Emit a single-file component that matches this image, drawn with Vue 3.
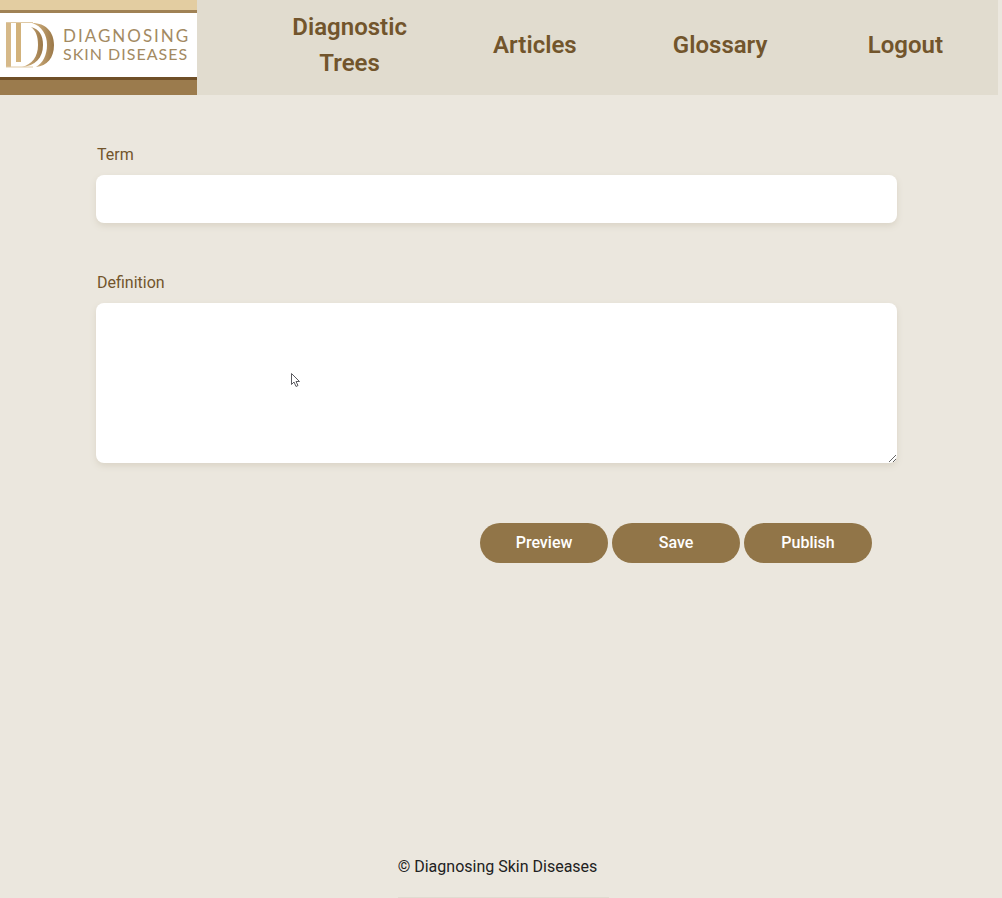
<script setup>
import { ref } from 'vue'

const navItems = ['Diagnostic Trees', 'Articles', 'Glossary', 'Logout']
const actions = ['Preview', 'Save', 'Publish']
const term = ref('')
const definition = ref('')
</script>

<template>
  <div class="page">
    <header class="header">
      <a class="logo" href="#">
        <svg class="mark" viewBox="0 0 50 46" width="50" height="46" aria-hidden="true">
          <defs>
            <linearGradient id="gold" x1="0" x2="1">
              <stop offset="0" stop-color="#d8b988" />
              <stop offset="1" stop-color="#9a7747" />
            </linearGradient>
          </defs>
          <rect x="1" y="1" width="5" height="44" fill="#d6b989" />
          <rect x="11" y="1" width="5" height="39" fill="#d2b27b" />
          <path d="M1 .5H28M1 45H28" fill="none" stroke="#dfc9a5" />
          <path d="M26 5C34 7 38 13 38 23C38 36 30 44 17 45C27 42 33 35 33 23C33 14 31 9 26 5Z" fill="url(#gold)" />
          <path d="M27 1C41 1 49 10 49 23S42 44 31 45C38 41 42 33 42 23S37 4 27 1Z" fill="url(#gold)" />
        </svg>
        <span class="wordmark">
          <span class="word-top">DIAGNOSING</span>
          <span class="word-bottom">SKIN DISEASES</span>
        </span>
      </a>
      <nav class="nav">
        <a v-for="item in navItems" :key="item" href="#">{{ item }}</a>
      </nav>
    </header>

    <main class="main">
      <form class="form" @submit.prevent>
        <div class="field">
          <label for="term">Term</label>
          <input id="term" v-model="term" type="text" />
        </div>
        <div class="field">
          <label for="definition">Definition</label>
          <textarea id="definition" v-model="definition"></textarea>
          <svg class="pointer" viewBox="0 0 12 18" width="12" height="18" aria-hidden="true">
            <path d="M1.500 1.500V12.500L4 10L6 14.500L8 13.500L6 9.500H9.500Z" fill="#fff" stroke="#5b5b60" />
          </svg>
        </div>
        <div class="actions">
          <button v-for="action in actions" :key="action" type="button">{{ action }}</button>
        </div>
      </form>
    </main>

    <footer class="footer">
      <p>© Diagnosing Skin Diseases</p>
    </footer>
  </div>
</template>

<style>
body {
  margin: 0;
  background: #ebe7de;
}
</style>

<style scoped>
.page {
  box-sizing: border-box;
  min-height: 100vh;
  display: flex;
  flex-direction: column;
  background: #ebe7de;
  color: #212121;
  font: 16px/24px Roboto, sans-serif;
}

.header {
  display: flex;
  margin-right: 4px;
  background: #e1dccf;
}

.logo {
  box-sizing: border-box;
  flex: 0 0 197px;
  min-height: 95px;
  display: flex;
  align-items: center;
  gap: 8px;
  padding: 13px 0 18px 5px;
  background: linear-gradient(
    #e3cda1 0 10px,
    #a08255 10px 13px,
    #fff 13px 77px,
    #6f4f27 77px 80px,
    #9b7b4d 80px
  );
  text-decoration: none;
}

.mark {
  flex: none;
}

.wordmark {
  display: flex;
  flex-direction: column;
  color: #a38a62;
  font-family: Lato, sans-serif;
  line-height: 18px;
  white-space: nowrap;
}

.word-top {
  font-size: 17px;
  letter-spacing: 2px;
}

.word-bottom {
  font-size: 16px;
  letter-spacing: 1px;
}

.nav {
  flex: 1;
  display: grid;
  grid-template-columns: repeat(4, 1fr);
  align-items: center;
  padding: 0 0 5px 60px;
}

.nav a {
  padding: 0 32px;
  color: #72552c;
  font-size: 24px;
  font-weight: 600;
  line-height: 36px;
  text-align: center;
  text-decoration: none;
}

.main {
  flex: 1;
  padding: 48px 105px 48px 96px;
}

.field {
  position: relative;
  display: flex;
  flex-direction: column;
  gap: 8px;
  margin-bottom: 48px;
}

.field label {
  padding-left: 1px;
  color: #72552c;
}

.field input,
.field textarea {
  box-sizing: border-box;
  width: 100%;
  margin: 0;
  padding: 12px;
  border: 0;
  border-radius: 8px;
  background: #fff;
  box-shadow: 0 3px 6px #dad4c7;
  color: #212121;
  font: inherit;
}

.field input {
  height: 48px;
}

.field textarea {
  height: 160px;
  resize: vertical;
}

.pointer {
  position: absolute;
  top: 101px;
  left: 194px;
  pointer-events: none;
}

.actions {
  display: flex;
  justify-content: flex-end;
  gap: 4px;
  padding: 12px 25px 0 0;
}

.actions button {
  width: 128px;
  height: 40px;
  padding: 0;
  border: 0;
  border-radius: 20px;
  background: #917548;
  color: #fff;
  font: 500 16px/24px Roboto, sans-serif;
}

.footer {
  display: flex;
  justify-content: center;
  padding-left: 5px;
}

.footer p {
  margin: 0;
  padding: 0 12px 18px 0;
  border-bottom: 1px solid #e0dbd0;
}
</style>
